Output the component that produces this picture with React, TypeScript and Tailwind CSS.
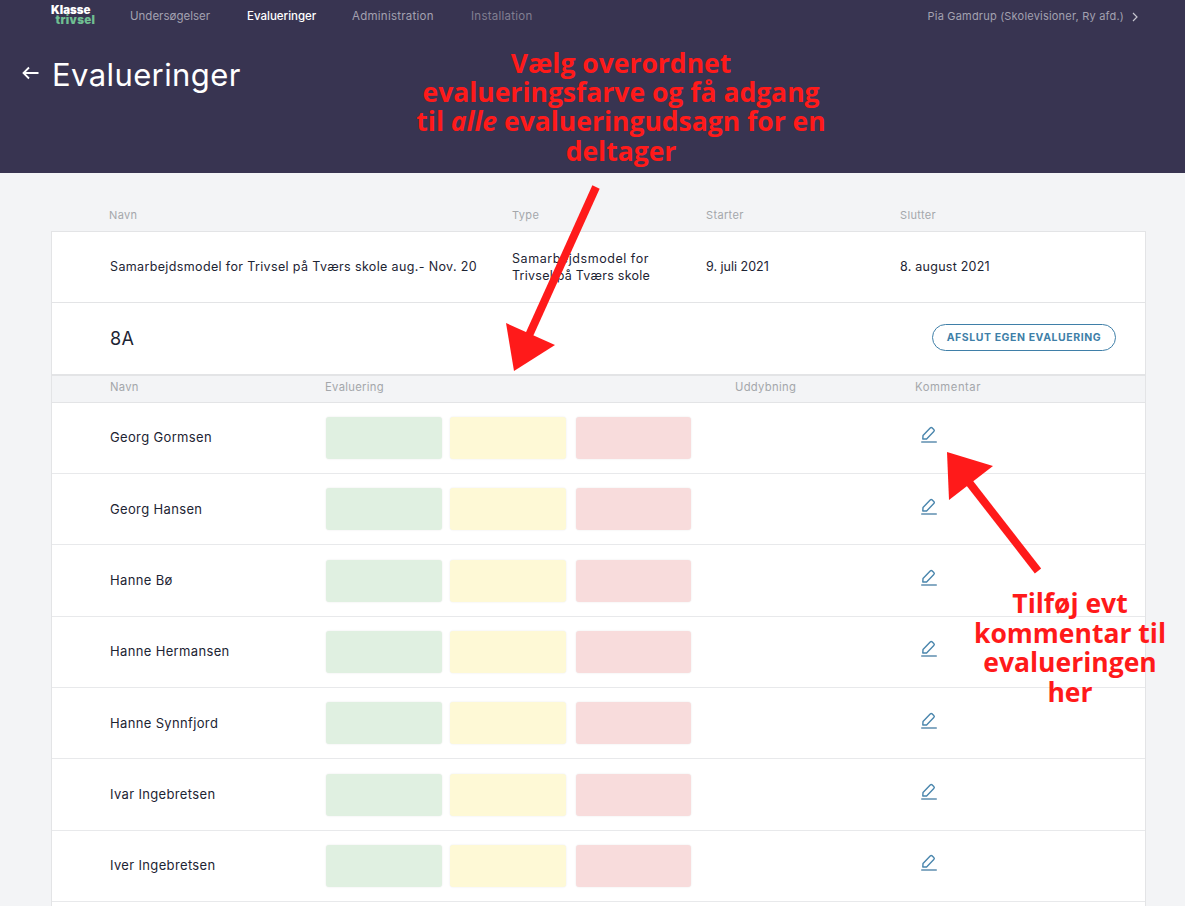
const font = { fontFamily: '"Inter", "Liberation Sans", sans-serif' };
const people = [
  "Georg Gormsen",
  "Georg Hansen",
  "Hanne Bø",
  "Hanne Hermansen",
  "Hanne Synnfjord",
  "Ivar Ingebretsen",
  "Iver Ingebretsen",
];

function EditIcon() {
  return (
    <svg width="16" height="17" viewBox="0 0 16 17" fill="none" stroke="#4a86ad" strokeWidth="1.4" strokeLinejoin="round" strokeLinecap="round">
      <path d="M1.8 13 L2 9.6 L9.2 2 C9.8 1.4 10.6 1.4 11.2 1.9 L12.8 3.5 C13.4 4.1 13.4 4.9 12.8 5.5 L5.6 13 Z" />
      <path d="M0.7 16h14.6" strokeWidth="1.5" stroke="#5f8fb0" />
    </svg>
  );
}

function PersonRow({ name }: { name: string }) {
  return (
    <div className="flex h-[71.34px] items-center border-b border-[#e8e9eb] bg-white">
      <div className="w-[274px] pl-[58px] text-[13px] tracking-[0.35px] text-[#1d2433]">{name}</div>
      <div className="flex w-[410px]">
        <div className="h-[42px] w-[116px] rounded-[3px] bg-[#e0f0e1] shadow-[0_0_2px_#e8e8e8]" />
        <div className="ml-2 h-[42px] w-[116px] rounded-[3px] bg-[#fef9d6] shadow-[0_0_2px_#e8e8e8]" />
        <div className="ml-[10px] h-[42px] w-[115px] rounded-[3px] bg-[#f8dcdc] shadow-[0_0_2px_#e8e8e8]" />
      </div>
      <div className="w-[179px]" />
      <div className="-mt-1.5 pl-[6px]"><EditIcon /></div>
    </div>
  );
}

export default function App() {
  return (
    <div className="relative h-[906px] overflow-hidden bg-[#f3f4f6]" style={font}>
      <header className="h-[173px] bg-[#383451]">
        <div className="flex h-[33px] items-center text-[11.5px] tracking-[0.25px]">
          <div className="-mt-0.5 ml-[51px] w-[79px] font-black leading-[9.5px]">
            <div className="text-[11.5px] tracking-[0] text-white">Klasse</div>
            <div className="ml-[4.5px] text-[11.5px] tracking-[0.35px] text-[#6fbf92]">trivsel</div>
          </div>
          <span className="w-[116px] tracking-[0] text-[#a3a1b0]">Undersøgelser</span>
          <span className="ml-px w-[105px] font-medium tracking-[0px] text-white">Evalueringer</span>
          <span className="w-[119px] text-[#a3a1b0]">Administration</span>
          <span className="text-[#817f92]">Installation</span>
          <span className="ml-auto text-[11px] tracking-[0.2px] text-[#a3a1b0]">Pia Gamdrup (Skolevisioner, Ry afd.)</span>
          <svg className="ml-[7px] mr-[46px]" width="8" height="10" viewBox="0 0 8 10" fill="none" stroke="#c6c5cf" strokeWidth="1.2"><path d="M2 1l4 4-4 4" /></svg>
        </div>
        <div className="mt-[20px] flex items-center pl-[22px]">
          <svg className="-mt-1" width="17" height="14" viewBox="0 0 17 14" fill="none" stroke="#fff" strokeWidth="1.8"><path d="M16.5 7H1.5M7 1.5L1.5 7 7 12.5" /></svg>
          <h1 className="ml-[13px] text-[31px] leading-[44px] tracking-[0.4px] text-white">Evalueringer</h1>
        </div>
      </header>

      <main className="px-[51px]">
        <div className="flex h-[58px] items-end pb-[8px] pl-[58px] text-[11px] tracking-[0.35px] text-[#a4a7ab]">
          <span className="w-[403px]">Navn</span>
          <span className="w-[194px]">Type</span>
          <span className="w-[194px]">Starter</span>
          <span>Slutter</span>
        </div>
        <div className="w-[1095px] border-x border-t border-[#e3e4e6]">
          <div className="flex h-[71px] items-center border-b border-[#e3e4e6] bg-white pl-[58px] text-[12.5px] tracking-[0.25px] text-[#1d2433]">
            <div className="w-[367px] overflow-hidden whitespace-nowrap tracking-[0.36px]">Samarbejdsmodel for Trivsel på Tværs skole aug.- Nov. 2021</div>
            <div className="ml-[35px] w-[194px] leading-[17px]">
              <div className="tracking-[0.55px]">Samarbejdsmodel for</div>
              <div className="tracking-[0.25px]">Trivsel på Tværs skole</div>
            </div>
            <div className="w-[194px] tracking-[0]">9. juli 2021</div>
            <div>8. august 2021</div>
          </div>
          <div className="flex h-[71px] items-center justify-between bg-white pl-[58px] pr-[29px]">
            <span className="text-[18px] tracking-[0.3px] text-[#1d2433]">8A</span>
            <button className="-mt-0.5 h-[27px] w-[184px] rounded-full border border-[#3f7fa8] text-[10.5px] font-bold tracking-[0.57px] text-[#3f7fa8]">AFSLUT EGEN EVALUERING</button>
          </div>
          <div className="flex h-[28.8px] items-center border-t-2 border-b border-[#e3e4e6] bg-[#f3f4f6] pb-[3px] pl-[58px] text-[11.25px] tracking-[0.3px] text-[#a4a7ab]">
            <span className="w-[215px]">Navn</span>
            <span className="w-[410px]">Evaluering</span>
            <span className="w-[180px]">Uddybning</span>
            <span className="tracking-[0.55px]">Kommentar</span>
          </div>
          {people.map((name) => <PersonRow key={name} name={name} />)}
          <div className="h-[20px] bg-white" />
        </div>
      </main>

      {/* annotations laid over the screenshot */}
      <svg className="absolute left-0 top-0" width="1185" height="906" fill="#ff1a1a">
        <path d="M596 187L526 342" stroke="#ff1a1a" strokeWidth="8" />
        <polygon points="506,323 555,345 514,371" />
        <path d="M1038 571L968 481" stroke="#ff1a1a" strokeWidth="8" />
        <polygon points="947,452 993,466 949,500" />
      </svg>
      <div className="absolute left-[401px] top-[49px] w-[440px] text-center text-[26.5px] font-bold leading-[29.2px] text-[#ff1a1a]" style={{ fontFamily: '"Open Sans", sans-serif' }}>
        Vælg overordnet<br />evalueringsfarve og få adgang<br />til <em>alle</em> evalueringudsagn for en<br />deltager
      </div>
      <div className="absolute left-[960px] top-[589px] w-[220px] text-center text-[26.5px] font-bold leading-[29.6px] text-[#ff1a1a]" style={{ fontFamily: '"Open Sans", sans-serif' }}>
        Tilføj evt<br />kommentar til<br />evalueringen<br />her
      </div>
    </div>
  );
}
